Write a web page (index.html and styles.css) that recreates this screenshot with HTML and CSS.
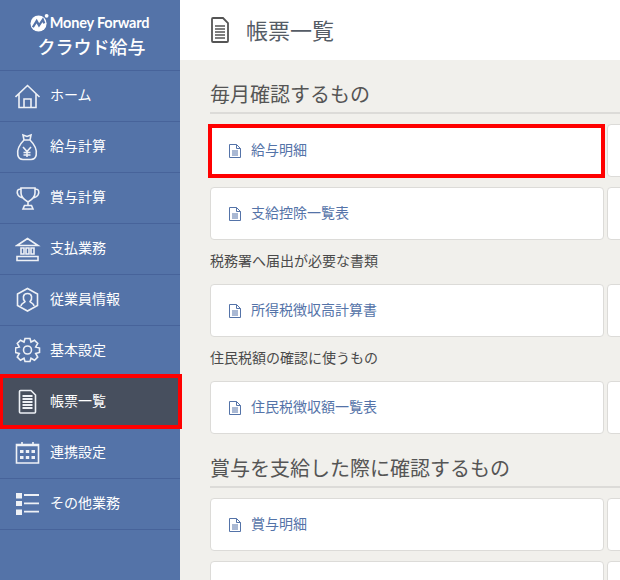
FILE: index.html
```html
<!DOCTYPE html>
<html lang="ja">
<head>
<meta charset="utf-8">
<title>帳票一覧</title>
<link rel="stylesheet" href="styles.css">
</head>
<body>
<div class="app">
  <aside class="sidebar">
    <div class="brand">
      <div class="brand-top">
        <svg class="brand-mark" viewBox="0 0 20 20"><circle cx="9" cy="11" r="8.500" fill="#fff"/><path d="M3 15 L7 8.500 L9.500 13 L13.500 7 L15 11" fill="none" stroke="#5473a8" stroke-width="2.400"/><circle cx="17.500" cy="3" r="2" fill="#fff"/></svg>
        <span class="brand-name">Money Forward</span>
      </div>
      <div class="brand-sub">クラウド給与</div>
    </div>
    <nav class="nav">
      <a class="nav-item"><svg class="nav-icon" viewBox="0 0 28 28"><path d="M.5 15 L12.500 3.500 L24.500 15 M4 12 V25.500 H21 V12 M9 25.500 V17 H16 V25.500"/></svg><span class="nav-label">ホーム</span></a>
      <a class="nav-item"><svg class="nav-icon" viewBox="0 0 28 28"><path d="M8 2 L12 3.500 L16 2 L15 7 H9 Z M9 7 C3 13 2 18 2.800 22 C3.500 25.500 6 26.500 8 26.500 H16 C18 26.500 20.500 25.500 21.200 22 C22 18 21 13 15 7"/><path d="M8 14 L12 18.500 L16 14 M12 18.500 V24 M8.500 19.500 H15.500 M8.500 22 H15.500"/></svg><span class="nav-label">給与計算</span></a>
      <a class="nav-item"><svg class="nav-icon" viewBox="0 0 28 28"><path d="M6 4 H20 V9 C20 13 16.500 16 13 18 C9.500 16 6 13 6 9 Z M6 5.500 C2 4.500 1.500 8 3 11 C4 13 6 13.500 8 14 M20 5.500 C24 4.500 24.500 8 23 11 C22 13 20 13.500 18 14 M13 18 V21.500 M9.500 21.500 H16.500 L18 25 H8 Z"/></svg><span class="nav-label">賞与計算</span></a>
      <a class="nav-item"><svg class="nav-icon" viewBox="0 0 28 28"><path d="M2 10.500 L12.500 3.500 L23 10.500 Z M6 13 H9 V19 H6 Z M11 13 H14 V19 H11 Z M16 13 H19 V19 H16 Z M2 21.500 H23 V25.500 H2 Z"/></svg><span class="nav-label">支払業務</span></a>
      <a class="nav-item"><svg class="nav-icon" viewBox="0 0 28 28"><path d="M12.500 2.500 L22.500 8 V19.500 L12.500 25 L2.500 19.500 V8 Z M6 20 C6 17 9.500 17 10 15.500 C7.500 13 7.500 7.500 12.500 7.500 C17.500 7.500 17.500 13 15 15.500 C15.500 17 19 17 19 20"/></svg><span class="nav-label">従業員情報</span></a>
      <a class="nav-item"><svg class="nav-icon" viewBox="0 0 28 28"><path transform="translate(-1.500 -1)" d="M11.500 2.500 H16.500 L17.500 6 L21 4.200 L24.200 7.500 L22.200 11 L26 12 V16.500 L22.200 17.500 L24.200 21 L21 24.200 L17.500 22.200 L16.500 25.500 H11.500 L10.500 22.200 L7 24.200 L3.800 21 L5.800 17.500 L2 16.500 V12 L5.800 11 L3.800 7.500 L7 4.200 L10.500 6 Z"/><circle cx="12.500" cy="13" r="4"/></svg><span class="nav-label">基本設定</span></a>
      <a class="nav-item is-active"><svg class="nav-icon" viewBox="0 0 28 28"><path d="M5.500 2.500 H16 L20.500 7 V24 Q20.500 25 19.500 25 H5.500 Q4.500 25 4.500 24 V3.500 Q4.500 2.500 5.500 2.500 Z"/><path class="nav-thick" d="M7.500 8 H17.500 M7.500 11 H17.500 M7.500 14 H17.500 M7.500 17 H17.500 M7.500 20 H17.500"/></svg><span class="nav-label">帳票一覧</span></a>
      <a class="nav-item"><svg class="nav-icon" viewBox="0 0 28 28"><path d="M1.500 5.500 H23.500 V24 H1.500 Z M1.500 6.500 H23.500 M7 3 V7 M18 3 V7"/><path class="nav-fill" d="M5 11 H8.500 V14 H5 Z M10.800 11 H14.200 V14 H10.800 Z M16.500 11 H20 V14 H16.500 Z M5 17 H8.500 V20 H5 Z M10.800 17 H14.200 V20 H10.800 Z M16.500 17 H20 V20 H16.500 Z"/></svg><span class="nav-label">連携設定</span></a>
      <a class="nav-item"><svg class="nav-icon" viewBox="0 0 28 28"><path class="nav-fill" d="M1 3 H7 V8.500 H1 Z M1 11 H7 V16 H1 Z M1 19.500 H7 V25 H1 Z"/><path class="nav-thick" d="M9 5 H24 M9 13.300 H24 M9 21.700 H24"/></svg><span class="nav-label">その他業務</span></a>
    </nav>
  </aside>
  <main class="main">
    <header class="page-header">
      <svg class="page-icon" viewBox="0 0 18 26"><path d="M2 1 H12 L17 6 V24 Q17 25 16 25 H2 Q1 25 1 24 V2 Q1 1 2 1 Z"/><path d="M4 9 H14 M4 12 H14 M4 15 H14 M4 18 H14 M4 21 H14" stroke-width="1.600"/></svg>
      <h1 class="page-title">帳票一覧</h1>
    </header>
    <div class="content">
      <h2 class="section-title">毎月確認するもの</h2>
      <div class="card-grid">
        <a class="card is-marked"><svg class="card-icon" viewBox="0 0 12 14"><path d="M.5 .5 H7.500 L11.500 4.500 V13.500 H.5 Z M7.500 .5 V4.500 H11.500 M3 7 H9 M3 9 H9 M3 11 H9"/></svg><span class="card-label">給与明細</span></a>
        <a class="card"></a>
        <a class="card"><svg class="card-icon" viewBox="0 0 12 14"><path d="M.5 .5 H7.500 L11.500 4.500 V13.500 H.5 Z M7.500 .5 V4.500 H11.500 M3 7 H9 M3 9 H9 M3 11 H9"/></svg><span class="card-label">支給控除一覧表</span></a>
        <a class="card"></a>
      </div>
      <h3 class="sub-title">税務署へ届出が必要な書類</h3>
      <div class="card-grid">
        <a class="card"><svg class="card-icon" viewBox="0 0 12 14"><path d="M.5 .5 H7.500 L11.500 4.500 V13.500 H.5 Z M7.500 .5 V4.500 H11.500 M3 7 H9 M3 9 H9 M3 11 H9"/></svg><span class="card-label">所得税徴収高計算書</span></a>
        <a class="card"></a>
      </div>
      <h3 class="sub-title">住民税額の確認に使うもの</h3>
      <div class="card-grid">
        <a class="card"><svg class="card-icon" viewBox="0 0 12 14"><path d="M.5 .5 H7.500 L11.500 4.500 V13.500 H.5 Z M7.500 .5 V4.500 H11.500 M3 7 H9 M3 9 H9 M3 11 H9"/></svg><span class="card-label">住民税徴収額一覧表</span></a>
        <a class="card"></a>
      </div>
      <h2 class="section-title section-title-next">賞与を支給した際に確認するもの</h2>
      <div class="card-grid">
        <a class="card"><svg class="card-icon" viewBox="0 0 12 14"><path d="M.5 .5 H7.500 L11.500 4.500 V13.500 H.5 Z M7.500 .5 V4.500 H11.500 M3 7 H9 M3 9 H9 M3 11 H9"/></svg><span class="card-label">賞与明細</span></a>
        <a class="card"></a>
        <a class="card"></a>
        <a class="card"></a>
      </div>
    </div>
  </main>
</div>
</body>
</html>
```
FILE: styles.css
```css
* { box-sizing: border-box; }
html, body { margin: 0; height: 100%; overflow: hidden; }
body { font-family: "Noto Sans CJK JP", "Noto Sans", sans-serif; color: #4a4a4a; }
.app { display: flex; width: 620px; height: 580px; overflow: hidden; }

.sidebar { flex: 0 0 180px; background: #5473a8; color: #fff; position: relative; z-index: 1; }
.brand { height: 71px; border-bottom: 1px solid #47639a; display: flex; flex-direction: column; align-items: center; padding: 12px 0 0 3px; }
.brand-top { display: flex; align-items: center; gap: 1px; height: 20px; margin-left: -4px; }
.brand-mark { width: 19px; height: 19px; }
.brand-name { font-family: Lato, sans-serif; font-weight: 700; font-size: 14.5px; letter-spacing: -.2px; }
.brand-sub { font-size: 18px; line-height: 26px; font-weight: 500; margin-top: 1px; }

.nav-item { display: flex; align-items: center; height: 51px; padding-left: 15px; border-bottom: 1px solid #47639a; font-size: 14px; gap: 7px; }
.nav-label { margin-bottom: 4px; }
.nav-icon { flex: none; width: 28px; height: 28px; fill: none; stroke: #eef1f6; stroke-width: 1.600; }
.nav-fill { fill: #eef1f6; stroke: none; }
.nav-thick { stroke-width: 1.800; }
.nav-item.is-active { background: #474f5e; position: relative; }
.nav-item.is-active::after { content: ""; position: absolute; top: -3px; bottom: -2px; left: -1px; right: -2px; border: 4px solid #f00; }

.main { flex: 1; min-width: 0; background: #f1f0ec; }
.page-header { height: 60px; background: #fff; display: flex; align-items: center; padding-left: 31px; gap: 17px; }
.page-icon { flex: none; width: 18px; height: 26px; fill: none; stroke: #555; stroke-width: 1.800; }
.page-title { margin: 0 0 2px; font-size: 22px; font-weight: 400; color: #555c66; line-height: 28px; }

.content { padding: 20px 0 0 30px; }
.section-title { width: 410px; margin: 0 0 10px; font-size: 20px; font-weight: 400; line-height: 27px; border-bottom: 2px solid #dcdbd8; height: 34px; color: #555; }
.section-title-next { margin-top: 20px; }
.sub-title { margin: 9px 0 13px; font-size: 14px; font-weight: 400; line-height: 22px; color: #4a4a4a; }

.card-grid { display: grid; grid-template-columns: 394px 394px; gap: 10px 3px; }
.card { display: flex; align-items: center; gap: 10px; height: 53px; padding-left: 18px; background: #fff; border: 1px solid #dcdbd8; border-radius: 4px; font-size: 14px; color: #5473a8; }
.card-label { margin-bottom: 3px; }
.card.is-marked { position: relative; }
.card.is-marked::after { content: ""; position: absolute; top: -1px; bottom: -2px; left: -3px; right: -2px; border: 4px solid #f00; }
.card-icon { flex: none; width: 12px; height: 14px; fill: none; stroke: #5473a8; stroke-width: 1; }
```
